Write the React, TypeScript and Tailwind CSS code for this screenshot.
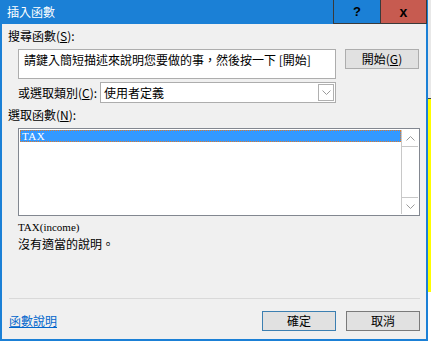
import React from "react";

const cjk = "font-['Microsoft_JhengHei','Noto_Sans_CJK_TC',sans-serif]";

function Chevron({ dir }: { dir: "up" | "down" }) {
  return (
    <svg width="9" height="5" viewBox="0 0 9 5">
      {dir === "up" ? (
        <polyline points="0.5,4.5 4.5,0.5 8.5,4.5" fill="none" stroke="#9a9a9a" strokeWidth="1" />
      ) : (
        <polyline points="0.5,0.5 4.5,4.5 8.5,0.5" fill="none" stroke="#9a9a9a" strokeWidth="1" />
      )}
    </svg>
  );
}

export default function App() {
  return (
    <div className={`w-[431px] h-[343px] flex flex-col bg-white overflow-hidden ${cjk} text-[12px] text-black`}>
      <div className="flex h-[341px]">
        {/* Dialog */}
        <div className="w-[428px] h-[341px] flex flex-col bg-[#1b80d6] px-[2px] pb-[2px]">
          {/* Title bar */}
          <div className="h-[24px] flex items-stretch -mx-[2px]">
            <div className="flex-1 flex items-center pl-[7px] text-white text-[12px] leading-none">插入函數</div>
            <div className="w-[47px] border-l border-b border-[#3a3a3a] flex items-center justify-center">
              <span className="font-['Liberation_Sans',sans-serif] font-bold text-[13px] text-black leading-none">?</span>
            </div>
            <div className="w-[47px] border-l border-r border-b border-[#3a3a3a] bg-[#c75b50] flex items-center justify-center mr-[1px]">
              <span className="font-['Liberation_Sans',sans-serif] font-bold text-[14px] text-black leading-none">x</span>
            </div>
          </div>
          {/* Content */}
          <div className="flex-1 bg-[#f0f0f0] flex flex-col">
            <div className="h-[16px] mt-[4px] ml-[6px] leading-[16px]">
              搜尋函數(<u>S</u>):
            </div>
            <div className="flex mt-[5px]">
              <div className="ml-[16px] w-[318px] h-[30px] bg-white border border-[#adadad] pl-[5px] pt-[3px] leading-[14px]">
                請鍵入簡短描述來說明您要做的事，然後按一下 [開始]
              </div>
              <div className="ml-[9px] w-[74px] h-[20px] bg-[#e1e1e1] border border-[#adadad] flex items-center justify-center leading-none">
                開始(<u>G</u>)
              </div>
            </div>
            <div className="flex items-center mt-[3px]">
              <div className="ml-[16px] w-[82px] leading-[16px]">
                或選取類別(<u>C</u>):
              </div>
              <div className="w-[236px] h-[21px] bg-white border border-[#adadad] flex items-center">
                <span className="flex-1 pl-[3px] leading-none">使用者定義</span>
                <div className="w-[16px] h-[17px] mr-[1px] border border-[#b0b0b0] flex items-center justify-center">
                  <Chevron dir="down" />
                </div>
              </div>
            </div>
            <div className="h-[16px] mt-[4px] ml-[6px] leading-[16px]">
              選取函數(<u>N</u>):
            </div>
            {/* List */}
            <div className="ml-[16px] mt-[5px] w-[402px] h-[88px] border border-[#828790] bg-white p-[1px] flex">
              <div className="flex-1">
                <div className="h-[12px] bg-[#3399ff] border border-dotted border-[#e07a2a] flex items-center pl-[1px]">
                  <span className="font-['Liberation_Serif',serif] text-[11px] tracking-[0.5px] text-white leading-none">TAX</span>
                </div>
              </div>
              <div className="w-[17px] flex flex-col border-l border-[#c8c8c8]">
                <div className="h-[17px] border-b border-[#c8c8c8] flex items-center justify-center">
                  <Chevron dir="up" />
                </div>
                <div className="flex-1" />
                <div className="h-[17px] border-t border-[#c8c8c8] flex items-center justify-center">
                  <Chevron dir="down" />
                </div>
              </div>
            </div>
            <div className="ml-[16px] mt-[5px] h-[12px] leading-[12px] font-['Liberation_Serif',serif] text-[11px]">
              TAX(income)
            </div>
            <div className="ml-[16px] mt-[3px] leading-[16px]">沒有適當的說明。</div>
            <div className="flex-1" />
            <div className="ml-[7px] w-[411px] h-px bg-[#d9d9d9]" />
            <div className="flex items-center mt-[12px] mb-[8px]">
              <span className="ml-[7px] text-[#0066cc] underline leading-none">函數說明</span>
              <div className="flex-1" />
              <div className="w-[74px] h-[20px] bg-[#e1e1e1] border border-[#3c7fb1] flex items-center justify-center leading-none">
                確定
              </div>
              <div className="ml-[10px] mr-[6px] w-[74px] h-[20px] bg-[#e1e1e1] border border-[#7a7a7a] flex items-center justify-center leading-none">
                取消
              </div>
            </div>
          </div>
        </div>
        {/* Spreadsheet strip behind */}
        <div className="w-[3px] flex flex-col">
          <div className="h-[98px] bg-[#e8e8e8]" />
          <div className="h-[194px] bg-[#ffff00] border-t border-[#404040]" />
          <div className="flex-1 bg-white" />
        </div>
      </div>
      <div className="h-[2px] bg-white" />
    </div>
  );
}
